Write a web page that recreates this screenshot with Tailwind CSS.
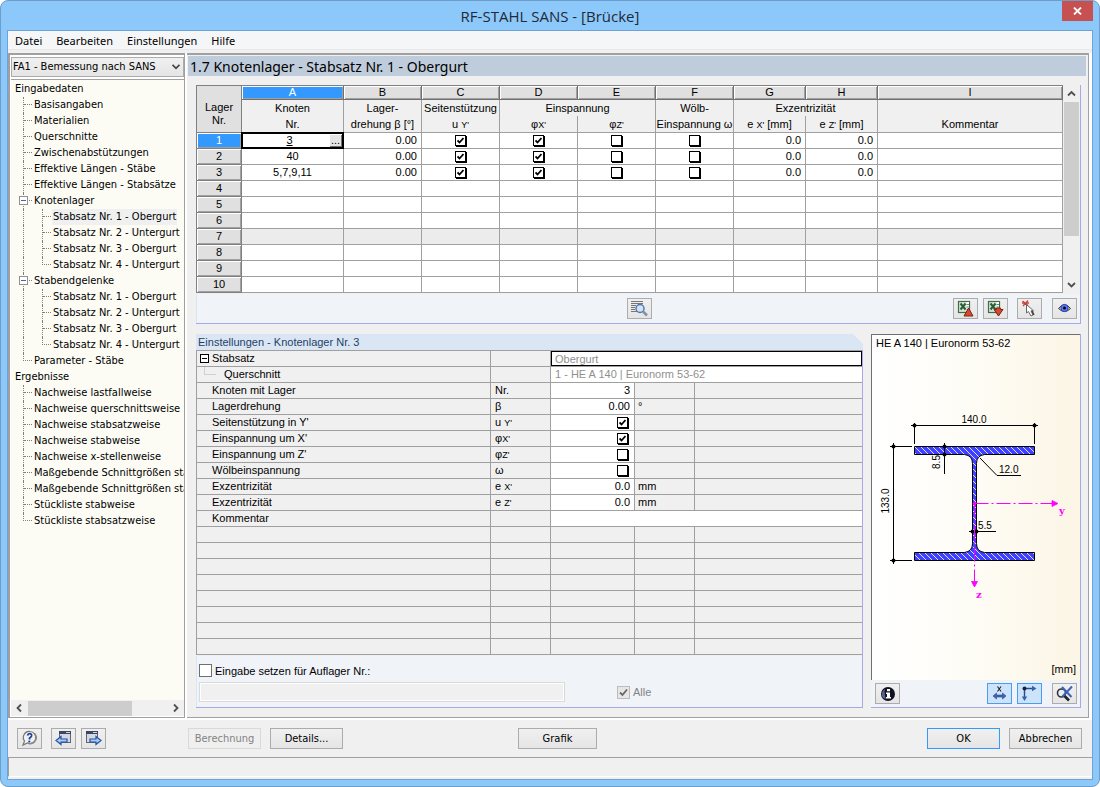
<!DOCTYPE html>
<html lang="de">
<head>
<meta charset="utf-8">
<title>RF-STAHL SANS - [Brücke]</title>
<script src="https://cdn.jsdelivr.net/npm/@tailwindcss/browser@4"></script>
</head>
<body class="bg-white font-['Liberation_Sans',sans-serif] text-[11px] leading-4 text-black">
<div class="flex min-h-screen flex-col rounded-lg border border-[#6f9dc9] bg-[#8dc8fa] px-[6px] pb-[6px]">

  <!-- title bar -->
  <header class="relative flex h-[29px] items-center justify-center">
    <h1 class="font-['Open_Sans',sans-serif] text-[15px] leading-5 text-[#1e2a38]">RF-STAHL SANS - [Brücke]</h1>
    <button aria-label="Schließen" class="absolute right-0 top-0 flex h-5 w-[31px] items-center justify-center bg-[#c75050]">
      <svg width="9" height="8" viewBox="0 0 9 8"><path d="M1 .5L8 7.500M8 .5L1 7.500" stroke="#fff" stroke-width="1.800"/></svg>
    </button>
  </header>

  <div class="flex flex-1 flex-col border border-[#6fa3d6] bg-[#f0f0f0]">
    <nav class="flex h-[19px] items-center gap-[14px] border-b border-[#e8e8e8] bg-[#f5f6f7] pl-[7px] pt-px font-['Noto_Sans',sans-serif] text-[11px]">
      <a href="#">Datei</a><a href="#">Bearbeiten</a><a href="#">Einstellungen</a><a href="#">Hilfe</a>
    </nav>

    <div class="mt-[3px] flex flex-1 bg-white pb-[2px]">
      <!-- navigator -->
      <aside class="flex w-[177px] shrink-0 flex-col border-b border-l-2 border-r border-t-2 border-[#a0a0a0] pb-px pl-px pt-[2px] font-['DejaVu_Sans_Condensed','DejaVu_Sans',sans-serif]">
        <div class="relative">
          <select aria-label="Bemessungsfall" class="block h-5 w-full appearance-none border border-[#acacac] bg-linear-to-b from-[#f0f0f0] to-[#e5e5e5] pl-[1px] text-[11px]"><option>FA1 - Bemessung nach SANS</option></select>
          <svg class="pointer-events-none absolute right-[4px] top-[7px]" width="8" height="6" viewBox="0 0 8 6"><path d="M.5 .8L4 4.300L7.500 .8" fill="none" stroke="#444" stroke-width="1.800"/></svg>
        </div>
        <div class="mt-[2px] flex-1 border-t border-[#a0a0a0] bg-[#fcfcf5] pt-px">
          <ul id="tree" class="overflow-hidden"></ul>
        </div>
        <div class="flex h-4 items-center bg-[#f0f0f0]">
          <svg width="17" height="16" viewBox="0 0 17 16"><path d="M10 4.500L6.500 8L10 11.500" fill="none" stroke="#505050" stroke-width="1.800"/></svg>
          <div class="h-[15px] w-[104px] bg-[#cdcdcd]"></div>
          <svg class="ml-auto" width="17" height="16" viewBox="0 0 17 16"><path d="M7 4.500L10.500 8L7 11.500" fill="none" stroke="#505050" stroke-width="1.800"/></svg>
        </div>
      </aside>

      <!-- input mask -->
      <main class="ml-[2px] mr-[3px] flex min-w-0 flex-1 flex-col border-b border-r border-t-2 border-[#a0a0a0] bg-[#f0f0f0]">
        <h2 class="mr-[2px] mt-px ml-px h-5 bg-[#bfccdb] pl-[2px] font-['Noto_Sans',sans-serif] text-[14px] leading-[21px] text-black">1.7 Knotenlager - Stabsatz Nr. 1 - Obergurt</h2>

        <section class="ml-[9px] mr-[7px] mt-[9px] border-b border-r border-[#a8a8e8]">
          <div class="flex pr-px">
            <table class="flex-1 table-fixed border-separate border-spacing-0 border-l border-t border-[#808080] bg-white text-center">
              <colgroup><col class="w-[45px]"><col class="w-[102px]"><col class="w-[78px]"><col class="w-[78px]"><col class="w-[78px]"><col class="w-[78px]"><col class="w-[78px]"><col class="w-[72px]"><col class="w-[72px]"><col></colgroup>
              <thead id="head" class="bg-[#f0f0f0]"></thead>
              <tbody id="rows"></tbody>
            </table>
            <div class="flex w-[16px] flex-col items-end bg-[#f0f0f0]">
              <svg width="15" height="17" viewBox="0 0 15 17"><path d="M4 10.500L7.500 7L11 10.500" fill="none" stroke="#505050" stroke-width="1.800"/></svg>
              <div class="h-[134px] w-[15px] bg-[#cdcdcd]"></div>
              <svg class="mt-auto" width="15" height="17" viewBox="0 0 15 17"><path d="M4 7L7.500 10.500L11 7" fill="none" stroke="#505050" stroke-width="1.800"/></svg>
            </div>
          </div>
          <div class="mt-px flex h-[29px] items-center justify-end border-l border-[#dbe6f4] bg-[#f0f4f9] pr-[3px]">
            <button aria-label="Details anzeigen" class="mr-[301px] flex h-[21px] w-[25px] items-center justify-center border border-[#acacac] bg-linear-to-b from-[#f0f0f0] to-[#e5e5e5]">
              <svg width="17" height="17" viewBox="0 0 17 17"><path d="M0 1.500H12M0 3.500H12M0 5.500H5M0 7.500H4M0 9.500H4M0 11.500H6" stroke="#777"/><circle cx="9" cy="8.500" r="4" fill="#cfe2f8" fill-opacity=".8" stroke="#5278ad" stroke-width="1.500"/><path d="M12 11.500L16 15.500" stroke="#7f93a8" stroke-width="2.500"/></svg>
            </button>
            <button aria-label="Excel-Export" class="mr-[5px] flex h-[21px] w-[25px] items-center justify-center border border-[#acacac] bg-linear-to-b from-[#f0f0f0] to-[#e5e5e5]">
              <svg width="17" height="17" viewBox="0 0 17 17"><rect x="1.500" y="1.500" width="11" height="11" fill="#d5e6d5" stroke="#3f6b49" stroke-width="1.200"/><rect x="9.500" y="2" width="2.500" height="10" fill="#fff"/><path d="M9.500 4.500H12M9.500 7H12M9.500 9.500H12" stroke="#5f8f68"/><path d="M3.500 3.500L8.500 9.500M8.500 3.500L3.500 9.500" stroke="#2a5c38" stroke-width="2"/><path d="M11.500 8L16 16H7Z" fill="#d8482e" stroke="#7a2415" stroke-width="1"/></svg>
            </button>
            <button aria-label="Excel-Import" class="mr-[9px] flex h-[21px] w-[25px] items-center justify-center border border-[#acacac] bg-linear-to-b from-[#f0f0f0] to-[#e5e5e5]">
              <svg width="17" height="17" viewBox="0 0 17 17"><rect x="1.500" y="1.500" width="11" height="11" fill="#d5e6d5" stroke="#3f6b49" stroke-width="1.200"/><rect x="9.500" y="2" width="2.500" height="10" fill="#fff"/><path d="M9.500 4.500H12M9.500 7H12" stroke="#5f8f68"/><path d="M3.500 3.500L8.500 9.500M8.500 3.500L3.500 9.500" stroke="#2a5c38" stroke-width="2"/><path d="M7 9.500H9.500V8H13.500V9.500H16L11.500 16Z" fill="#d8482e" stroke="#7a2415" stroke-width="1"/></svg>
            </button>
            <button aria-label="Auswählen" class="mr-[10px] flex h-[21px] w-[25px] items-center justify-center border border-[#acacac] bg-linear-to-b from-[#f0f0f0] to-[#e5e5e5]">
              <svg width="17" height="17" viewBox="0 0 17 17"><path d="M1.500 1L7 5.500M7 .5L2 6M1 3H8" stroke="#c8463c" stroke-width="1.300"/><path d="M5.500 4.500V13L7.500 11.500L10 16L12 15L10 10.800H12.500Z" fill="#fff" stroke="#666"/><path d="M11 11L12.800 15" stroke="#444" stroke-width="1.800"/></svg>
            </button>
            <button aria-label="Sichtmodus" class="flex h-[21px] w-[25px] items-center justify-center border border-[#acacac] bg-linear-to-b from-[#f0f0f0] to-[#e5e5e5]">
              <svg width="15" height="15" viewBox="0 0 15 15"><path d="M1.500 7.500Q7.500 0 13.500 7.500Q7.500 13.500 1.500 7.500Z" fill="#c9d3ec" stroke="#333" stroke-width="1"/><circle cx="7.500" cy="7" r="3.600" fill="#5b7cf0" stroke="#2c43b0"/><circle cx="7.500" cy="7" r="1.500" fill="#000"/></svg>
            </button>
          </div>
        </section>

        <div class="mb-[9px] ml-[9px] mr-[7px] mt-[10px] flex flex-1 gap-2">
          <!-- support settings -->
          <section class="flex min-w-0 flex-1 flex-col border-b border-r border-[#a8a8e8]">
            <h3 class="relative -mr-px h-4 bg-[#dbe6f4] pl-[2px] text-[#1f3f66]">Einstellungen - Knotenlager Nr. 3
              <svg class="absolute right-0 top-0" width="10" height="10"><path d="M0 0H10V10Z" fill="#f0f0f0"/></svg>
            </h3>
            <table class="w-full table-fixed border-separate border-spacing-0 border-l border-t border-[#a0a0a0]">
              <colgroup><col class="w-[294px]"><col class="w-[60px]"><col class="w-[84px]"><col class="w-[60px]"><col></colgroup>
              <tbody id="props"></tbody>
            </table>
            <div class="mt-px flex-1 border-l border-[#dbe6f4] bg-[#f0f4f9] pl-[2px] pt-2">
              <label class="flex h-[13px] items-center gap-[3px]"><input type="checkbox" class="h-[13px] w-[13px] appearance-none border border-[#707070] bg-white">Eingabe setzen für Auflager Nr.:</label>
              <div class="mt-[5px] flex items-center">
                <input type="text" disabled aria-label="Auflager Nr." class="h-5 w-[366px] border border-[#d9d9d9] bg-[#f0f0f0] shadow-[inset_0_0_0_1px_#fff]">
                <label class="ml-[52px] flex items-center gap-[3px] text-[#838383]"><span class="relative flex"><input type="checkbox" checked disabled class="h-[13px] w-[13px] appearance-none border border-[#bcbcbc] bg-[#e6e6e6]"><svg class="absolute left-[2px] top-[2px]" width="9" height="9" viewBox="0 0 9 9"><path d="M1 4.500L3.500 7L8 1.500" fill="none" stroke="#666" stroke-width="1.800"/></svg></span>Alle</label>
              </div>
            </div>
          </section>

          <!-- cross-section view -->
          <section class="flex w-[210px] shrink-0 flex-col border-b border-r border-[#a8a8e8]">
            <div class="relative flex-1 border-l border-t border-[#707070] bg-linear-to-r from-white via-[#fefcf5] to-[#fbf5e4]">
              <p class="absolute left-[4px] top-0">HE A 140 | Euronorm 53-62</p>
              <svg width="208" height="344" viewBox="872 335 208 344" font-family="Liberation Sans" font-size="10">
                <defs><pattern id="hatch" width="6" height="6" patternUnits="userSpaceOnUse"><rect width="6" height="6" fill="#4040ff"/><path d="M-1 -1L7 7" stroke="#dcdcff" stroke-width="1"/></pattern></defs>
                <path d="M914.500 446.500H1034.500V454.500H984.500Q976.500 455.500 976.500 463.500V543.500Q976.500 551.500 984.500 552.500H1034.500V560.500H914.500V552.500H964.500Q972.500 551.500 972.500 543.500V463.500Q972.500 455.500 964.500 454.500H914.500Z" fill="url(#hatch)" stroke="#000"/>
                <g stroke="#000" fill="none">
                  <path d="M911 425.500H1038M914.500 423V444M1034.500 423V444M893.500 443V564M890 446.500H912M890 560.500H912M944.500 443V474M980 458L997 475.500H1021M969 531.500H996"/>
                </g>
                <g fill="#000">
                  <circle cx="914.500" cy="425.500" r="2"/><circle cx="1034.500" cy="425.500" r="2"/><circle cx="893.500" cy="446.500" r="2"/><circle cx="893.500" cy="560.500" r="2"/><circle cx="944.500" cy="446.500" r="2"/><circle cx="944.500" cy="454.500" r="2"/><circle cx="972.500" cy="531.500" r="2"/><circle cx="976.500" cy="531.500" r="2"/>
                  <text x="974" y="423" text-anchor="middle">140.0</text>
                  <text x="999" y="473">12.0</text>
                  <text x="978" y="529">5.5</text>
                  <text transform="translate(889 501) rotate(-90)" text-anchor="middle">133.0</text>
                  <text transform="translate(940 462) rotate(-90)" text-anchor="middle">8.5</text>
                </g>
                <g stroke="#f0f" fill="#f0f">
                  <path d="M974.500 503.500H1052" stroke-dasharray="14 3 2 3"/><path d="M974.500 503.500V581" stroke-dasharray="14 3 2 3"/>
                  <circle cx="974.500" cy="503.500" r="1.500"/><path d="M1052 500.500V506.500L1058 503.500ZM971.500 581.500H977.500L974.500 587Z" stroke-width=".8"/>
                </g>
                <g fill="#f0f" font-family="DejaVu Serif" font-weight="bold" font-size="10"><text x="1059" y="514">y</text><text x="976" y="598">z</text></g>
              </svg>
              <p class="absolute bottom-[3px] right-[4px]">[mm]</p>
            </div>
            <div class="flex h-[27px] items-center bg-[#f0f4f9] pl-[4px] pr-[3px]">
              <button aria-label="Info" class="flex h-[21px] w-[25px] items-center justify-center border border-[#acacac] bg-linear-to-b from-[#f0f0f0] to-[#e5e5e5]">
                <svg width="16" height="16" viewBox="0 0 16 16"><circle cx="8" cy="8" r="7" fill="#10131f"/><path d="M3 12A6 6 0 0 1 5 3Q4 8 6 13Z" fill="#55618f"/><path d="M7 3H10V5.200H7ZM6 6.500H10V11H11V12.500H6V11H7V8H6Z" fill="#fff"/></svg>
              </button>
              <button aria-label="Bemaßung" class="ml-auto flex h-[21px] w-[25px] items-center justify-center border border-[#4b9cea] bg-[#cbe4fb]">
                <svg width="17" height="17" viewBox="0 0 17 17"><path d="M6.500 1.500L10 6.500M10 1.500L6.500 6.500" stroke="#222" stroke-width="1.100"/><path d="M2 11L5.500 8V10H11.500V8L15 11L11.500 14V12H5.500V14Z" fill="#3f66b5" stroke="#2b4788" stroke-width=".6"/></svg>
              </button>
              <button aria-label="Achsen" class="ml-[5px] flex h-[21px] w-[25px] items-center justify-center border border-[#4b9cea] bg-[#cbe4fb]">
                <svg width="17" height="17" viewBox="0 0 17 17"><path d="M3.500 3.500V13M3.500 3.500H12" stroke="#2c4a86" stroke-width="1.400"/><circle cx="3.500" cy="3.500" r="2" fill="#16233f"/><path d="M11 .8L15.500 3.500L11 6.200ZM.8 11.500H6.200L3.500 16Z" fill="#3461b0"/></svg>
              </button>
              <button aria-label="Ansicht zurücksetzen" class="ml-[10px] flex h-[21px] w-[25px] items-center justify-center border border-[#acacac] bg-linear-to-b from-[#f0f0f0] to-[#e5e5e5]">
                <svg width="17" height="17" viewBox="0 0 17 17"><circle cx="5.500" cy="8" r="4" fill="#e8eef8" stroke="#333" stroke-width="1.600"/><path d="M8.500 11L13 15.500" stroke="#222" stroke-width="2.600"/><path d="M6 2L15.500 12M16 1.500L6.500 11.500" stroke="#3c63b8" stroke-width="2"/></svg>
              </button>
            </div>
          </section>
        </div>
      </main>
    </div>

    <!-- command bar -->
    <footer class="flex h-[37px] items-center pl-[9px] pr-[10px] font-['DejaVu_Sans_Condensed','DejaVu_Sans',sans-serif]">
      <button aria-label="Hilfe" class="flex h-[21px] w-[25px] items-center justify-center border border-[#acacac] bg-linear-to-b from-[#f0f0f0] to-[#e5e5e5]">
        <svg width="17" height="17" viewBox="0 0 17 17"><path d="M9 1.500A6 6 0 1 1 6.500 13L2 15L3.500 11A6 6 0 0 1 9 1.500Z" fill="#eef2f7" stroke="#777" stroke-width="1.200"/><path d="M13.500 3.500A6 6 0 0 1 8 13.500" fill="none" stroke="#888" stroke-width="1.500"/><path d="M6.500 5.500Q7 3.500 9 3.700Q11 4 10.500 6Q10.200 7 8.500 8.200V9.500" fill="none" stroke="#27408f" stroke-width="1.800"/><circle cx="8.300" cy="11.500" r="1.100" fill="#27408f"/></svg>
      </button>
      <button aria-label="Vorherige Maske" class="ml-[9px] flex h-[21px] w-[25px] items-center justify-center border border-[#acacac] bg-linear-to-b from-[#f0f0f0] to-[#e5e5e5]">
        <svg width="17" height="17" viewBox="0 0 17 17"><rect x="4.500" y="1.500" width="11" height="11" fill="#d3d9e2" stroke="#666"/><rect x="4" y="1" width="12" height="3" fill="#3c4663"/><path d="M11 2.500H15" stroke="#cfd6e6"/><path d="M1 10.500L6 6.500V9H12V12H6V14.500Z" fill="#a9cafa" stroke="#2450a0" stroke-width="1.200"/></svg>
      </button>
      <button aria-label="Nächste Maske" class="ml-[5px] flex h-[21px] w-[25px] items-center justify-center border border-[#acacac] bg-linear-to-b from-[#f0f0f0] to-[#e5e5e5]">
        <svg width="17" height="17" viewBox="0 0 17 17"><rect x="1.500" y="1.500" width="11" height="11" fill="#d3d9e2" stroke="#666"/><rect x="1" y="1" width="12" height="3" fill="#3c4663"/><path d="M8 2.500H12" stroke="#cfd6e6"/><path d="M16 10.500L11 6.500V9H5V12H11V14.500Z" fill="#a9cafa" stroke="#2450a0" stroke-width="1.200"/></svg>
      </button>
      <button disabled class="ml-[82px] h-[21px] w-[73px] border border-[#d9d9d9] bg-[#efefef] text-[#838383]">Berechnung</button>
      <button class="ml-[9px] h-[21px] w-[73px] border border-[#acacac] bg-linear-to-b from-[#f0f0f0] to-[#e5e5e5]">Details...</button>
      <button class="ml-[175px] h-[21px] w-[79px] border border-[#acacac] bg-linear-to-b from-[#f0f0f0] to-[#e5e5e5]">Grafik</button>
      <button class="ml-auto h-[21px] w-[73px] border border-[#3399ff] bg-linear-to-b from-[#f0f0f0] to-[#e5e5e5]">OK</button>
      <button class="ml-[9px] h-[21px] w-[73px] border border-[#acacac] bg-linear-to-b from-[#f0f0f0] to-[#e5e5e5]">Abbrechen</button>
    </footer>
    <div class="mb-[2px] h-[20px] border-b border-l border-t border-b-white border-l-[#a0a0a0] border-t-[#a0a0a0]"></div>
  </div>
</div>

<script>
// Navigator: [level, label, last in branch, has expander, selected]
const tree = [
  [0, 'Eingabedaten'], [1, 'Basisangaben'], [1, 'Materialien'], [1, 'Querschnitte'], [1, 'Zwischenabstützungen'],
  [1, 'Effektive Längen - Stäbe'], [1, 'Effektive Längen - Stabsätze'], [1, 'Knotenlager', 0, 1],
  [2, 'Stabsatz Nr. 1 - Obergurt', 0, 0, 1], [2, 'Stabsatz Nr. 2 - Untergurt'], [2, 'Stabsatz Nr. 3 - Obergurt'], [2, 'Stabsatz Nr. 4 - Untergurt', 1],
  [1, 'Stabendgelenke', 0, 1],
  [2, 'Stabsatz Nr. 1 - Obergurt'], [2, 'Stabsatz Nr. 2 - Untergurt'], [2, 'Stabsatz Nr. 3 - Obergurt'], [2, 'Stabsatz Nr. 4 - Untergurt', 1],
  [1, 'Parameter - Stäbe', 1], [0, 'Ergebnisse'],
  [1, 'Nachweise lastfallweise'], [1, 'Nachweise querschnittsweise'], [1, 'Nachweise stabsatzweise'], [1, 'Nachweise stabweise'],
  [1, 'Nachweise x-stellenweise'], [1, 'Maßgebende Schnittgrößen sta'], [1, 'Maßgebende Schnittgrößen sta'],
  [1, 'Stückliste stabweise'], [1, 'Stückliste stabsatzweise', 1]
];
const branch = (last) => last
  ? '<span class="h-4 w-[9px] shrink-0"><span class="block h-2 border-b border-l border-dotted border-[#808080]"></span></span>'
  : '<span class="h-4 w-[9px] shrink-0 border-l border-dotted border-[#808080]"><span class="block h-2 border-b border-dotted border-[#808080]"></span></span>';
const expander = '<button aria-label="Zuklappen" class="absolute left-[8px] top-[3px] flex h-[9px] w-[9px] items-center justify-center border border-[#919191] bg-white"><span class="h-px w-[5px] bg-[#4b63a7]"></span></button>';
document.getElementById('tree').innerHTML = tree.map(([level, label, last, exp, sel]) => {
  const link = `<a href="#" class="${sel ? 'bg-[#f0f0f0] px-[1px]' : 'px-[1px]'}">${label}</a>`;
  if (level === 0) return `<li class="flex h-4 pl-[3px] whitespace-nowrap">${link}</li>`;
  if (level === 1) return `<li class="relative flex h-4 gap-[1px] pl-[12px] whitespace-nowrap">${branch(last)}${exp ? expander : ''}${link}</li>`;
  return `<li class="flex h-4 gap-[1px] pl-[12px] whitespace-nowrap"><span class="h-4 w-[18px] shrink-0 border-l border-dotted border-[#808080]"></span>${branch(last)}${link}</li>`;
}).join('');

const sym = (a, b) => `${a}<span class="text-[9px] leading-none">${b}</span>`;
const check = (on, label) => `<label class="relative inline-flex h-[11px] w-[11px] align-top"><input type="checkbox" aria-label="${label}" ${on ? 'checked' : ''} class="peer h-[11px] w-[11px] appearance-none border border-black bg-white shadow-[1px_1px_0_0_#000]"><svg class="absolute left-[2px] top-[2px] hidden peer-checked:block" width="7" height="7" viewBox="0 0 7 7"><path d="M.5 3.500L2.500 5.500L6.500 1" fill="none" stroke="#000" stroke-width="1.800"/></svg></label>`;

// Table header
const letters = 'ABCDEFGHI'.split('').map((c, i) => `<th class="h-[14px] border-b border-r border-[#707070] p-0 font-normal leading-[13px] ${i ? 'bg-[#e0e0e0] shadow-[inset_1px_1px_0_0_#fff,inset_-1px_-1px_0_0_#a0a0a0]' : 'bg-[#3399ff] text-white shadow-[inset_1px_1px_0_0_#fff,inset_-1px_-1px_0_0_#a0a0a0]'}">${c}</th>`).join('');
const top1 = [['Knoten', 1], ['Lager-', 1], ['Seitenstützung', 1], ['Einspannung', 2], ['Wölb-', 1], ['Exzentrizität', 2], ['', 1]]
  .map(([t, n]) => `<th colspan="${n}" class="h-4 border-r border-[#a0a0a0] p-0 font-normal leading-[15px] whitespace-nowrap">${t}</th>`).join('');
const top2 = ['Nr.', 'drehung β [°]', sym('u ', "Y'"), sym('φ', "X'"), sym('φ', "Z'"), 'Einspannung ω', sym('e ', "X'") + ' [mm]', sym('e ', "Z'") + ' [mm]', 'Kommentar']
  .map(t => `<th class="h-[17px] border-b border-r border-[#a0a0a0] p-0 font-normal leading-[14px] whitespace-nowrap">${t}</th>`).join('');
document.getElementById('head').innerHTML =
  `<tr><th rowspan="3" class="border-b border-r border-[#808080] bg-[#e0e0e0] p-0 pb-[5px] align-bottom font-normal leading-[13px]">Lager<br>Nr.</th>${letters}</tr><tr>${top1}</tr><tr>${top2}</tr>`;

// Table rows
const data = ['3', '40', '5,7,9,11'];
document.getElementById('rows').innerHTML = Array.from({length: 10}, (_, r) => {
  const on = r < 3, cell = 'h-4 border-b border-r border-[#a0a0a0] p-0 leading-[15px]';
  const num = (v, p) => `<td class="${cell} ${p} text-right">${on ? v : ''}</td>`;
  const box = (v, n) => `<td class="${cell}">${on ? `<div class="flex justify-center">${check(v, n + ' ' + (r + 1))}</div>` : ''}</td>`;
  const first = r === 0
    ? `<td class="${cell}"><div class="flex h-[15px] items-center outline outline-black border border-black"><input type="text" aria-label="Knoten Nr." value="3" class="w-full min-w-0 flex-1 pl-[6px] text-center underline outline-none"><button aria-label="Auswahl" class="h-[12px] w-[12px] shrink-0 border-b border-r border-[#707070] bg-[#e4e4e4] leading-[6px]">...</button></div></td>`
    : `<td class="${cell}">${data[r] || ''}</td>`;
  return `<tr class="${r === 6 ? 'bg-[#ececec]' : ''}"><th class="h-4 border-b border-r border-[#808080] p-0 font-normal leading-[15px] ${r ? 'bg-[#e0e0e0] shadow-[inset_1px_1px_0_0_#fff,inset_-1px_-1px_0_0_#a0a0a0]' : 'bg-[#3399ff] text-white shadow-[inset_1px_1px_0_0_#fff,inset_-1px_-1px_0_0_#a0a0a0]'}">${r + 1}</th>${first}${num('0.00', 'pr-[4px]')}${box(1, 'u Y')}${box(1, 'φ X')}${box(0, 'φ Z')}${box(0, 'ω')}${num('0.0', 'pr-[4px]')}${num('0.0', 'pr-[4px]')}<td class="${cell}"></td></tr>`;
}).join('');

// Settings list: [label, symbol, value, unit]
const props = [
  ['Knoten mit Lager', 'Nr.', '3', ''], ['Lagerdrehung', 'β', '0.00', '°'],
  ["Seitenstützung in Y'", sym('u ', "Y'"), true, ''], ["Einspannung um X'", sym('φ', "X'"), true, ''],
  ["Einspannung um Z'", sym('φ', "Z'"), false, ''], ['Wölbeinspannung', 'ω', false, ''],
  ['Exzentrizität', sym('e ', "X'"), '0.0', 'mm'], ['Exzentrizität', sym('e ', "Z'"), '0.0', 'mm']
];
const pc = 'h-4 border-b border-r border-[#a0a0a0] p-0 leading-[15px]';
const pl = 'h-4 border-b border-[#a0a0a0] p-0 leading-[15px]';
document.getElementById('props').innerHTML =
  `<tr><td class="${pc}"><div class="flex items-center gap-[3px] pl-[3px]"><button aria-label="Zuklappen" class="flex h-[9px] w-[9px] items-center justify-center border border-black bg-white"><span class="h-px w-[5px] bg-black"></span></button>Stabsatz</div></td><td class="${pc}"></td><td colspan="3" class="${pl} bg-white text-[#909090]"><div class="h-[15px] border border-black pl-[3px] leading-[14px]">Obergurt</div></td></tr>` +
  `<tr><td class="${pc}"><div class="flex pl-[7px]"><span class="h-[8px] w-[12px] border-b border-l border-[#d0d0d0]"></span><span class="pl-[8px]">Querschnitt</span></div></td><td class="${pc}"></td><td colspan="3" class="${pl} bg-white pl-[4px] text-[#909090]">1 - HE A 140 | Euronorm 53-62</td></tr>` +
  props.map(([l, s, v, u]) => `<tr><td class="${pc} pl-[15px]">${l}</td><td class="${pc} pl-[4px]">${s}</td><td class="${pc} bg-white pr-[4px] text-right">${typeof v === 'boolean' ? `<div class="flex justify-end pr-[2px]">${check(v, l)}</div>` : v}</td><td class="${pc} pl-[3px]">${u}</td><td class="${pl}"></td></tr>`).join('') +
  `<tr><td class="${pc} pl-[15px]">Kommentar</td><td class="${pc}"></td><td colspan="3" class="${pl} bg-white"></td></tr>` +
  Array.from({length: 8}, () => `<tr><td class="${pc}"></td><td class="${pc}"></td><td class="${pc}"></td><td class="${pc}"></td><td class="${pl}"></td></tr>`).join('');
</script>
</body>
</html>
